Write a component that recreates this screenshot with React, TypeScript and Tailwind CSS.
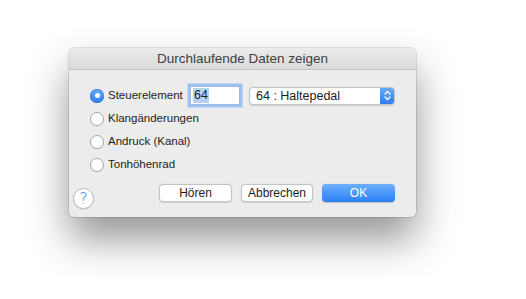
import React from "react";

function Radio({ checked }: { checked?: boolean }) {
  if (checked) {
    return (
      <span className="flex h-[14px] w-[14px] shrink-0 items-center justify-center rounded-full bg-gradient-to-b from-[#6aaaf8] to-[#2f7ff2] shadow-[inset_0_0_0_0.5px_#2c6fd6]">
        <span className="h-[5px] w-[5px] rounded-full bg-white" />
      </span>
    );
  }
  return (
    <span className="h-[14px] w-[14px] shrink-0 rounded-full border border-[#a9a9a9] bg-white shadow-[0_0.5px_0.5px_rgba(0,0,0,0.08)]" />
  );
}

const options = ["Klangänderungen", "Andruck (Kanal)", "Tonhöhenrad"];

export default function App() {
  return (
    <div className="min-h-[299px] w-[526px] bg-white pl-[69px] pt-[48px] text-[11.5px] text-[#1d1d1d] [font-family:'Liberation_Sans',Arial,sans-serif]">
      <div className="w-[347px] overflow-hidden rounded-[5px] bg-[#ececec] shadow-[0_0_0_0.5px_rgba(0,0,0,0.22),0_22px_40px_rgba(0,0,0,0.42)]">
        {/* title bar */}
        <div className="flex h-[22px] items-center justify-center border-b border-[#c4c4c4] bg-gradient-to-b from-[#ececec] to-[#d9d9d9] pt-[1px] text-[13.5px] text-[#404040]">
          Durchlaufende Daten zeigen
        </div>

        <div className="px-[21px] pt-[14px] pb-[8px]">
          <div className="flex h-[23px] items-center">
            <Radio checked />
            <span className="ml-[4px] w-[82px]">Steuerelement</span>
            <div className="flex h-[19px] w-[50px] items-center border border-[#9fb9e3] bg-white pl-[2px] text-[12.5px] shadow-[0_0_0_2.5px_#9cc1f2]">
              <span className="bg-[#b4d3f9] px-[1px] leading-[15px]">64</span>
            </div>
            <div className="ml-[9px] flex h-[18px] w-[146px] overflow-hidden rounded-[4px] border border-[#c3c3c3] bg-white text-[12.5px] shadow-[0_0.5px_1px_rgba(0,0,0,0.12)]">
              <span className="flex-1 pl-[6px] leading-[16px]">64 : Haltepedal</span>
              <span className="flex w-[14px] items-center justify-center bg-gradient-to-b from-[#68a8f8] to-[#2e7cf0]">
                <svg width="7" height="11" viewBox="0 0 7 11" fill="none" stroke="white" strokeWidth="1.3" strokeLinecap="round" strokeLinejoin="round">
                  <path d="M1 4 L3.5 1.5 L6 4" />
                  <path d="M1 7 L3.5 9.5 L6 7" />
                </svg>
              </span>
            </div>
          </div>
          {options.map((o) => (
            <div key={o} className="flex h-[23px] items-center">
              <Radio />
              <span className="ml-[4px]">{o}</span>
            </div>
          ))}

          <div className="mt-[8px] -ml-[17px] flex items-start">
            <div className="mt-[4px] flex h-[21px] w-[21px] items-center justify-center rounded-full border border-[#bdbdbd] bg-white pt-[1px] text-[16px] text-[#3d8bf2] shadow-[0_0.5px_1px_rgba(0,0,0,0.15)] [font-family:'DejaVu_Sans',sans-serif] font-light">
              ?
            </div>
            <div className="ml-auto flex gap-[9px] text-[12px]">
              <button className="h-[18px] w-[73px] rounded-[4px] border border-[#c3c3c3] bg-white leading-[16px] shadow-[0_0.5px_1px_rgba(0,0,0,0.12)]">
                Hören
              </button>
              <button className="h-[18px] w-[72px] rounded-[4px] border border-[#c3c3c3] bg-white leading-[16px] shadow-[0_0.5px_1px_rgba(0,0,0,0.12)]">
                Abbrechen
              </button>
              <button className="h-[18px] w-[73px] rounded-[4px] bg-gradient-to-b from-[#6cb0fa] to-[#2a7ff5] leading-[18px] text-white shadow-[0_0.5px_1px_rgba(0,0,0,0.2)]">
                OK
              </button>
            </div>
          </div>
        </div>
      </div>
    </div>
  );
}
